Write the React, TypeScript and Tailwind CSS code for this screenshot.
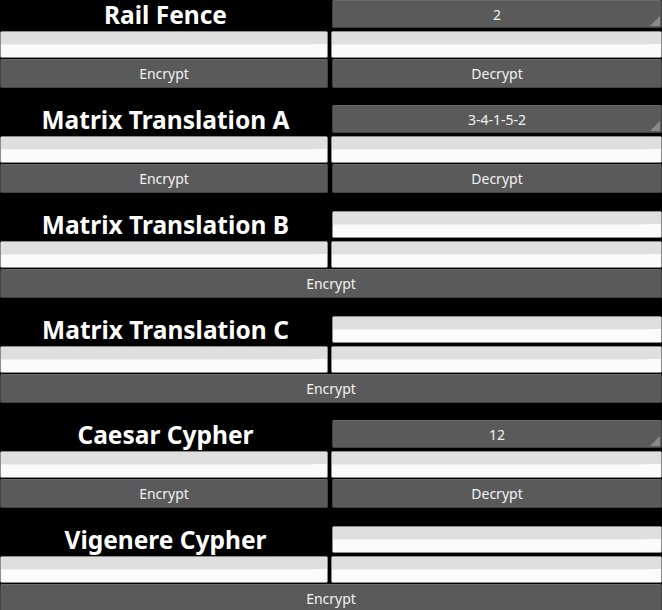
import React from "react";

const font = { fontFamily: '"Noto Sans", "Open Sans", sans-serif' };

function Field({ className = "" }: { className?: string }) {
  return (
    <div className={"relative flex flex-col overflow-hidden rounded-[2px] border border-[#8c8c8c] bg-[#fbfbfb] " + className}>
      <div className="h-[12px] bg-[#dfdfdf]" />
      <div className="h-[1px] bg-[#eeeeee] mr-[14px]" />
      <div className="flex-1 bg-[#fbfbfb]" />
    </div>
  );
}

function Button({ label, className = "" }: { label: string; className?: string }) {
  return (
    <div
      className={
        "flex items-center justify-center rounded-[2px] border border-[#444444] border-t-[#6a6a6a] bg-[#5a5a5a] text-[14px] text-[#f2f2f2] " +
        className
      }
    >
      {label}
    </div>
  );
}

function Spinner({ value }: { value: string }) {
  return (
    <div className="relative flex h-[28px] w-[330px] items-center justify-center rounded-[2px] border border-[#444444] border-t-[#6a6a6a] bg-[#5a5a5a] text-[14px] text-[#f2f2f2]">
      {value}
      <svg className="absolute bottom-[1px] right-[1px]" width="10" height="10" viewBox="0 0 10 10">
        <polygon points="10,0 10,10 0,10" fill="#8a8a8a" />
      </svg>
    </div>
  );
}

function Section({
  title,
  spinner,
  decrypt,
}: {
  title: string;
  spinner?: string;
  decrypt: boolean;
}) {
  return (
    <div className="flex h-[105px] flex-col">
      <div className="flex h-[28px]">
        <div className="flex w-[331px] items-center justify-center pt-[2px] text-[24.5px] font-bold leading-[28px] text-white">
          {title}
        </div>
        <div className="ml-[1px] flex">
          {spinner !== undefined ? (
            <Spinner value={spinner} />
          ) : (
            <Field className="mt-[1px] h-[27px] w-[330px]" />
          )}
        </div>
      </div>
      <div className="mt-[3px] flex h-[27px]">
        <Field className="h-[27px] w-[328px]" />
        <Field className="ml-[3px] h-[27px] w-[331px]" />
      </div>
      <div className="mt-[1px] flex h-[29px]">
        {decrypt ? (
          <>
            <Button label="Encrypt" className="h-[29px] w-[328px]" />
            <Button label="Decrypt" className="ml-[4px] h-[29px] w-[330px]" />
          </>
        ) : (
          <Button label="Encrypt" className="h-[29px] w-[662px]" />
        )}
      </div>
    </div>
  );
}

export default function App() {
  return (
    <div className="h-[610px] w-[662px] overflow-hidden bg-black" style={font}>
      <Section title="Rail Fence" spinner="2" decrypt />
      <Section title="Matrix Translation A" spinner="3-4-1-5-2" decrypt />
      <Section title="Matrix Translation B" decrypt={false} />
      <Section title="Matrix Translation C" decrypt={false} />
      <Section title="Caesar Cypher" spinner="12" decrypt />
      <Section title="Vigenere Cypher" decrypt={false} />
    </div>
  );
}
